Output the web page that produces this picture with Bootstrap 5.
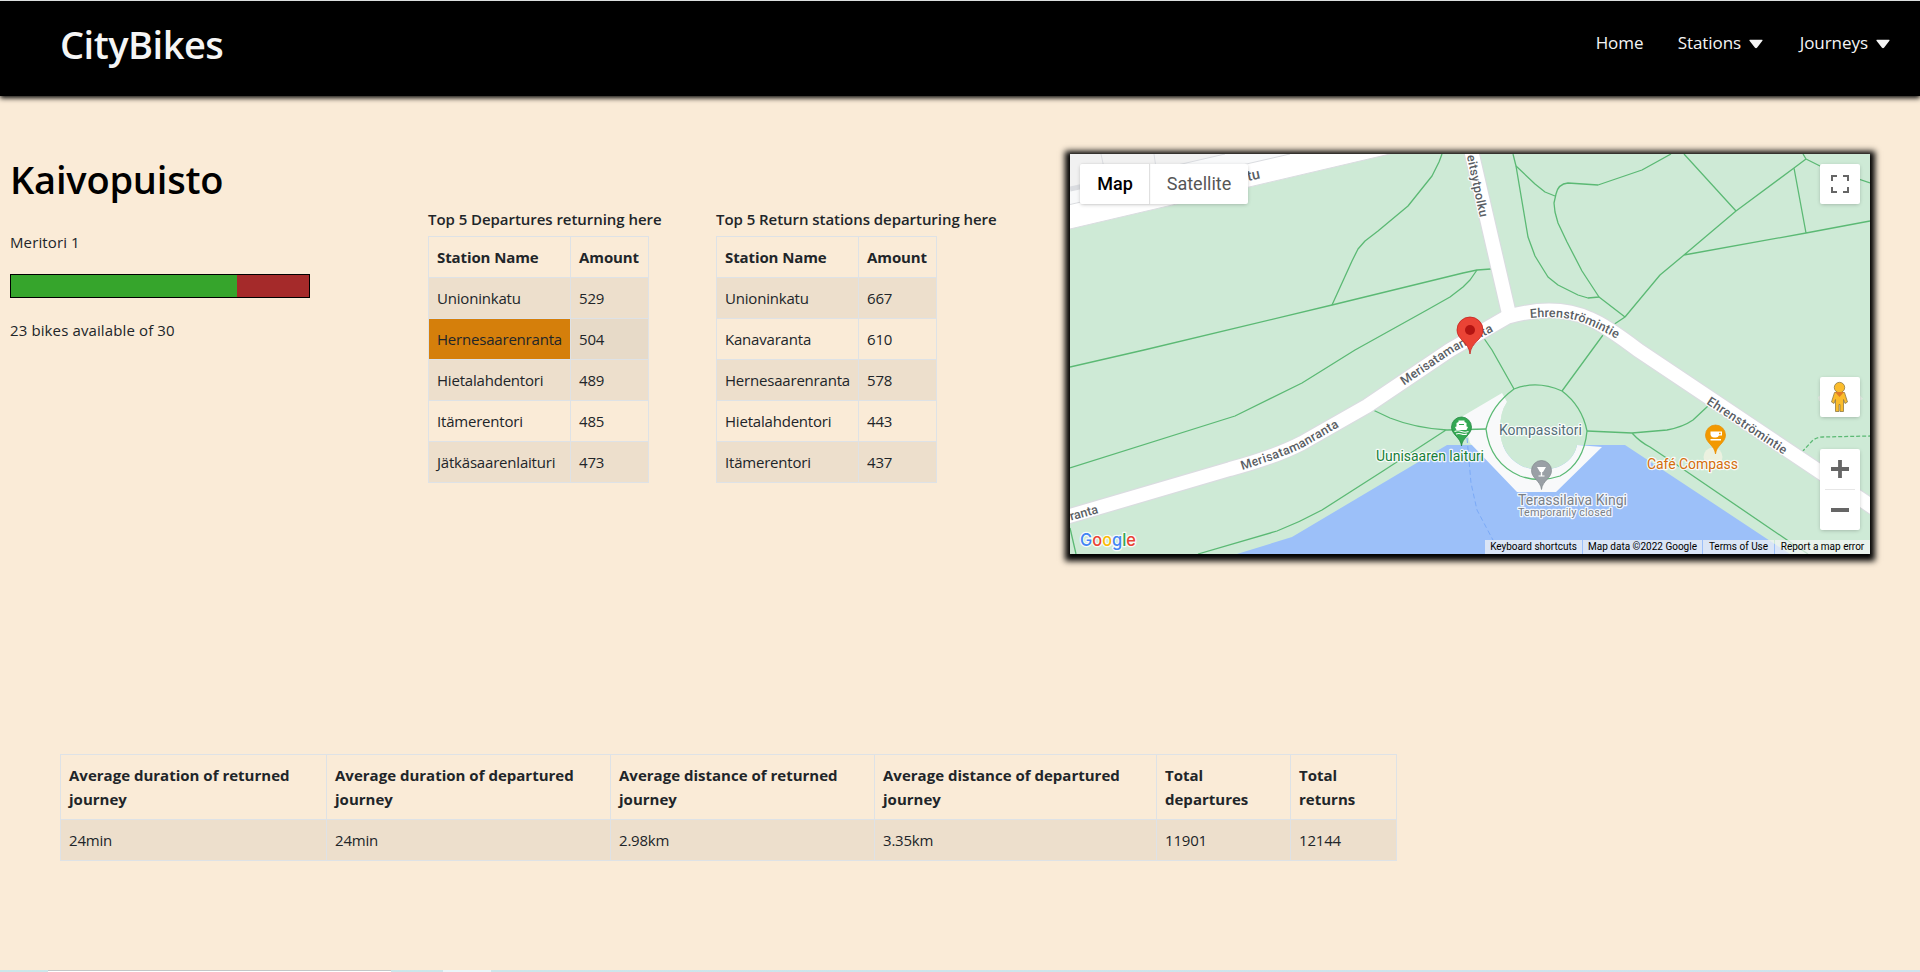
<!DOCTYPE html>
<html lang="en">
<head>
<meta charset="utf-8">
<meta name="viewport" content="width=device-width, initial-scale=1">
<title>CityBikes</title>
<link href="https://cdn.jsdelivr.net/npm/bootstrap@5.3.0/dist/css/bootstrap.min.css" rel="stylesheet">
<style>
  html, body { height: 972px; overflow: hidden; }
  body { background: #faebd7; font-family: "Open Sans", "Noto Sans", sans-serif; font-size: 15px; line-height: 24px; letter-spacing: -.2px; color: #212529; }
  h1 { font-size: 38px; line-height: 48px; font-weight: 600; margin: 0; }
  .site-header { height: 96px; background: #000; border-top: 1px solid #dcdfdf; box-shadow: 0 2px 5px #000; padding: 19px 30px 0 60px; color: whitesmoke; }
  .site-header h1 { letter-spacing: -.5px; }
  .site-nav { font-size: 17px; letter-spacing: -.05px; padding-top: 10px; }
  .site-nav a { color: whitesmoke; text-decoration: none; display: flex; align-items: center; }
  .site-nav a.plain { padding-top: 1px; }
  .site-nav svg { margin: 3px 0 0 8px; }
  .station-row { padding: 58px 50px 0 10px; height: 658px; }
  .station-info { width: 418px; padding-top: 1px; }
  .station-info h1 { color: #000; letter-spacing: -.2px; margin: 0 0 27px 0; }
  .station-info p { margin: 0 0 20px 0; letter-spacing: .12px; }
  .capacity { width: 300px; height: 24px; border: 1px solid #000; background: #a52a2a; margin-bottom: 20px; }
  .capacity-fill { height: 100%; background: #36a52c; }
  .top-list { padding-top: 53px; width: 288px; }
  .top-list.second { width: 354px; }
  .top-list h2 { font-size: 15px; line-height: 24px; font-weight: 600; letter-spacing: -.05px; margin: 0 0 5px; white-space: nowrap; }
  .stat-table { --bs-table-bg: transparent; --bs-table-striped-bg: rgba(0,0,0,.05); --bs-table-border-color: #dee2e6; table-layout: fixed; margin: 0; }
  .stat-table th { letter-spacing: -.1px; }
  .top-list .stat-table { width: 221px; }
  .stat-table td.picked { background: #d57f0b; box-shadow: none; }
  .stat-table td.picked-row { background: #e7dac8; box-shadow: none; }
  .summary { padding-left: 60px; height: 216px; }
  .summary .stat-table { width: 1337px; }
  .summary .stat-table th { letter-spacing: .01px; }
  .bottom-edge { height: 2px; background: linear-gradient(90deg, #cbe7ea, #cfe3ee); }
  .bottom-edge .field { margin-left: 48px; width: 343px; background: #fff; border-top: 1px solid #c3c7c9; }
  .bottom-edge .chip { margin-left: 52px; width: 48px; background: #eaf6fa; }

  .map-box { width: 800px; height: 400px; box-shadow: 0 2px 6px 5px #000; font-family: Roboto, sans-serif; letter-spacing: 0; overflow: visible; }
  .map-box > svg { display: block; }
  .ctl { position: absolute; background: #fff; border-radius: 2px; box-shadow: 0 1px 4px -1px rgba(0,0,0,.3); color: #666; }
  .map-type { left: 10px; top: 10px; width: 168px; height: 40px; font-size: 18px; line-height: 40px; }
  .map-type span:first-child { width: 69px; padding-left: 1px; color: #000; font-weight: 500; box-shadow: 1px 0 1px rgba(0,0,0,.12); text-align: center; }
  .map-type span:last-child { flex: 1; padding-left: 1px; color: #565656; text-align: center; }
  .full { left: 750px; top: 10px; width: 40px; height: 40px; }
  .peg { left: 750px; top: 223px; width: 40px; height: 40px; }
  .zoomer { left: 750px; top: 295px; width: 40px; height: 81px; }
  .attribution { position: absolute; right: 0; bottom: 0; height: 14px; width: 385px; font-size: 10px; line-height: 14px; color: #000; white-space: nowrap; gap: 1px; }
  .attribution span { background: rgba(245,245,245,.7); text-align: center; }
  .paths { fill: none; stroke: #5bb974; stroke-width: 1.3; stroke-linejoin: round; }
  .halo { stroke: #fff; stroke-width: 2.5px; stroke-linejoin: round; paint-order: stroke; stroke-opacity: .85; }
</style>
</head>
<body>
<header class="site-header d-flex justify-content-between align-items-start">
  <h1>CityBikes</h1>
  <nav class="site-nav d-flex">
    <a class="plain" href="#" style="width:82px">Home</a>
    <a href="#" style="width:122px">Stations<svg width="14" height="10"><path d="M1 .8h12q1 .2.4 1L8 8.8q-1 .9-2 0L.5 1.8q-.5-.8.5-1z" fill="#f5f5f5"/></svg></a>
    <a href="#">Journeys<svg width="14" height="10"><path d="M1 .8h12q1 .2.4 1L8 8.8q-1 .9-2 0L.5 1.8q-.5-.8.5-1z" fill="#f5f5f5"/></svg></a>
  </nav>
</header>

<main>
  <section class="station-row d-flex">
    <div class="station-info flex-shrink-0">
      <h1>Kaivopuisto</h1>
      <p>Meritori 1</p>
      <div class="capacity"><div class="capacity-fill" style="width:76%"></div></div>
      <p>23 bikes available of 30</p>
    </div>
    <div class="top-list flex-shrink-0">
      <h2>Top 5 Departures returning here</h2>
      <table class="table table-bordered table-striped stat-table">
        <colgroup><col style="width:142px"><col></colgroup>
        <thead><tr><th>Station Name</th><th>Amount</th></tr></thead>
        <tbody>
          <tr><td>Unioninkatu</td><td>529</td></tr>
          <tr><td class="picked">Hernesaarenranta</td><td class="picked-row">504</td></tr>
          <tr><td>Hietalahdentori</td><td>489</td></tr>
          <tr><td>Itämerentori</td><td>485</td></tr>
          <tr><td>Jätkäsaarenlaituri</td><td>473</td></tr>
        </tbody>
      </table>
    </div>
    <div class="top-list second flex-shrink-0">
      <h2>Top 5 Return stations departuring here</h2>
      <table class="table table-bordered table-striped stat-table">
        <colgroup><col style="width:142px"><col></colgroup>
        <thead><tr><th>Station Name</th><th>Amount</th></tr></thead>
        <tbody>
          <tr><td>Unioninkatu</td><td>667</td></tr>
          <tr><td>Kanavaranta</td><td>610</td></tr>
          <tr><td>Hernesaarenranta</td><td>578</td></tr>
          <tr><td>Hietalahdentori</td><td>443</td></tr>
          <tr><td>Itämerentori</td><td>437</td></tr>
        </tbody>
      </table>
    </div>
    <div class="map-box position-relative flex-shrink-0">
      <svg width="800" height="400" viewBox="0 0 800 400" font-family="Roboto, sans-serif">
        <rect width="800" height="400" fill="#ceead6"/>
        <!-- street corner -->
        <path d="M0 0H320L0 75z" fill="#fff"/>
        <path d="M0 50L220 0H0z" fill="#f8f9fa"/>
        <path d="M0 36L155 0H0z" fill="#f1f1f1"/>
        <path d="M0 35L14 32" stroke="#dadce0" stroke-width="5"/>
        <path d="M0 50.500L220 0M0 75L320 0M60 22L155 0M31 0L34 14M84 0L86 14" stroke="#dadce0" fill="none"/>
        <!-- water and pier -->
        <path d="M167 400L222 383L377 291H555L720 400z" fill="#9cc0f9"/>
        <path d="M393 262L432 239L437 248Q430 258 430 276Q431 300 450 311Q467 320 488 313Q504 306 507 291L532 293L486 338H447L400 289z" fill="#f8f9fa"/>
        <path d="M437 248Q430 258 430 276Q431 300 450 311Q467 320 488 313Q504 306 507 291L520 270L490 235L450 233z" fill="#ceead6"/>
        <path d="M397 284L401 329L407 356L424 388" fill="none" stroke="#7baaf7" stroke-dasharray="5 3"/>
        <circle cx="643" cy="303" r="9.500" fill="#ebf1e0"/>
        <path d="M748 243l5-4h35l5 6-4 2h-40z" fill="#e4ece4"/>
        <g class="paths">
          <path d="M372 0L369 8L362 22L338 52L308 77L295 87L288 95L282 107L267 140L262 151"/>
          <path d="M421 115L407 116L393 119L262 151L74 196L0 213"/>
          <path d="M407 116L400 126L393 133L380 143L357 156L285 196L232 229L165 262L0 314"/>
          <path d="M303 256L320 264Q345 274 377 276L416 275M376 276L313 317L252 356Q230 368 207 377L128 400M0 374L6 400"/>
          <path d="M413 183L422 196L444 235M533 181L522 196L492 237"/>
          <path d="M416 275Q421 252 444 235Q467 226 492 237Q512 252 517 277Q514 309 490 322Q470 329 450 322Q420 309 416 275z"/>
          <path d="M517 277L562 279L597 276Q613 273 623 266L638 252M562 279Q570 288 580 293L607 311L720 388L738 400"/>
          <path d="M732 298L743 286Q748 283 753 283L800 282" stroke-dasharray="4 2"/>
          <path d="M443 0L446 12L458 83L465 102L473 115L478 123L488 131L508 141L518 144L529 143L512 117L497 88L488 69L485 58L484 49L486 40Q488 30 498 29L513 30L528 31L572 16L601 0"/>
          <path d="M446 12L465 30L475 38L485 42M529 143L555 163L543 171M555 163L590 121L614 101L666 57L724 14L736 5L733 0M736 5L750 12L800 29M614 0L666 57M724 14L736 79M614 101L736 79L800 67"/>
        </g>
        <!-- roads -->
        <g fill="none" stroke-linejoin="round">
          <g stroke="#dadce0" stroke-width="16"><path d="M401.500 -2L417 65L439 160"/><path d="M-4 363L160 315Q205 303 232 289L297 252L380 196L437 163Q485 149 520 165Q535 171 568 196L804 354"/></g>
          <g stroke="#fff" stroke-width="13.800"><path d="M401.500 -2L417 65L439 160"/><path d="M-4 363L160 315Q205 303 232 289L297 252L380 196L437 163Q485 149 520 165Q535 171 568 196L804 354"/></g>
        </g>
        <defs>
          <path id="r1" d="M172 316Q215 302.500 232 294L292 259.500"/>
          <path id="r2" d="M334 231.500L383 198.500L442 167.500"/>
          <path id="r3" d="M460 164Q485 161.500 505 166Q525 171.500 560 192.500"/>
          <path id="r4" d="M636 249.500L728 310"/>
          <path id="r5" d="M395.500 -4L413 78"/>
        </defs>
        <g class="halo" fill="#5a5e64" font-size="12.500" font-weight="500">
          <text><textPath href="#r1" textLength="107">Merisatamanranta</textPath></text>
          <text><textPath href="#r2" textLength="105">Merisatamanranta</textPath></text>
          <text><textPath href="#r3" textLength="91">Ehrenströmintie</textPath></text>
          <text><textPath href="#r4" textLength="93">Ehrenströmintie</textPath></text>
          <text><textPath href="#r5" startOffset="6" textLength="63">eitsytpolku</textPath></text>
          <text transform="translate(1 366.500) rotate(-15)">ranta</text>
          <text transform="translate(178 27) rotate(-12)" font-size="14.500">tu</text>
        </g>
        <!-- selected station -->
        <path d="M400 200C399 188 387 186 387 176A13 13 0 0 1 413 176C413 186 401 188 400 200z" fill="#ea4335" stroke="#c5221f" stroke-width=".8"/>
        <circle cx="400" cy="176" r="5" fill="#b31412"/>
        <!-- places -->
        <g fill="#34a853" stroke="#188038" stroke-width=".7"><path d="M391.500 292C390.500 283 381.500 281 381.500 273A10 10 0 0 1 401.500 273C401.500 281 392.500 283 391.500 292z"/></g>
        <path d="M386.500 272.500v-3.500l2-1v-1.500h6v1.500l2 1v3.500l1.500.500-1.500 3h-10l-1.500-3z" fill="#fff"/>
        <path d="M389 270.500h5" stroke="#34a853"/>
        <path d="M384.500 277.500q3.500-1.500 7 0t7 0M386 280q3-1 5.500 0t5.500 0" fill="none" stroke="#fff" stroke-width="1.200"/>
        <g fill="#9aa0a6" stroke="#80868b" stroke-width=".7"><path d="M471.500 335.500C470.500 326.500 461.500 324.500 461.500 316.500A10 10 0 0 1 481.500 316.500C481.500 324.500 472.500 326.500 471.500 335.500z"/></g>
        <path d="M467 313h9l-3 5h-.8v3.500h2.300v1h-6v-1h2.300v-3.500h-.8z" fill="#fff"/>
        <g fill="#f29900" stroke="#e88b00" stroke-width=".7"><path d="M645.500 300C644.500 291 635.500 289 635.500 281A10 10 0 0 1 655.500 281C655.500 289 646.500 291 645.500 300z"/></g>
        <path d="M640.500 277.500h11.500v4h-3q-1 2-3 2h-2q-3 0-3.500-3zM640.500 285h10.500v1.500h-10.500z" fill="#fff"/><path d="M649 278.700h1.700v1.500h-1.700z" fill="#f29900"/>
        <g class="halo" font-size="14">
          <text x="306" y="307" fill="#188038" textLength="108">Uunisaaren laituri</text>
          <text x="429" y="281" fill="#546e7a" textLength="83">Kompassitori</text>
          <text x="448" y="351" fill="#7a7f86" textLength="109">Terassilaiva Kingi</text>
          <text x="448" y="362" fill="#7a7f86" font-size="11" textLength="94">Temporarily closed</text>
          <text x="577" y="315" fill="#d56e0c" textLength="91">Café Compass</text>
        </g>
        <text class="halo" x="10" y="391.500" font-size="17.500" font-family="Inter, sans-serif" font-weight="500" textLength="56" lengthAdjust="spacingAndGlyphs"><tspan fill="#4285f4">G</tspan><tspan fill="#ea4335">o</tspan><tspan fill="#fbbc04">o</tspan><tspan fill="#4285f4">g</tspan><tspan fill="#34a853">l</tspan><tspan fill="#ea4335">e</tspan></text>
      </svg>
      <div class="ctl map-type d-flex"><span>Map</span><span>Satellite</span></div>
      <div class="ctl full"><svg class="d-block" width="40" height="40" fill="none" stroke="#666" stroke-width="2"><path d="M12 17v-5h5M23 12h5v5M28 23v5h-5M17 28h-5v-5"/></svg></div>
      <div class="ctl peg"><svg class="d-block" width="40" height="40" fill="#fbbc2c" stroke="#8d7a48" stroke-width=".8"><path d="M14.500 15.500l-3 9.500 2.500 1.500 1.500-4v12h3.500v-7h1v7h3.500v-12l1.500 4 2.500-1.500-3-9.500z"/><circle cx="19.500" cy="10.500" r="5.200"/><path d="M15 15h9l-4.500 5z" fill="#e07b28" stroke="none"/></svg></div>
      <div class="ctl zoomer"><svg class="d-block" width="40" height="81"><path d="M11 20h18M20 11v18M11 61h18" stroke="#666" stroke-width="3.800"/><path d="M5 40.500h30" stroke="#e6e6e6"/></svg></div>
      <div class="attribution d-flex"><span style="width:97px">Keyboard shortcuts</span><span style="width:119px">Map data ©2022 Google</span><span style="width:71px">Terms of Use</span><span class="flex-fill">Report a map error</span></div>
    </div>
  </section>

  <section class="summary">
    <table class="table table-bordered table-striped stat-table">
      <colgroup><col style="width:266px"><col style="width:284px"><col style="width:264px"><col style="width:282px"><col style="width:134px"><col></colgroup>
      <thead><tr>
        <th>Average duration of returned journey</th><th>Average duration of departured journey</th><th>Average distance of returned journey</th><th>Average distance of departured journey</th><th>Total<br>departures</th><th>Total<br>returns</th>
      </tr></thead>
      <tbody><tr><td>24min</td><td>24min</td><td>2.98km</td><td>3.35km</td><td>11901</td><td>12144</td></tr></tbody>
    </table>
  </section>
</main>
<div class="bottom-edge d-flex"><div class="field"></div><div class="chip"></div></div>
<script src="https://cdn.jsdelivr.net/npm/bootstrap@5.3.0/dist/js/bootstrap.bundle.min.js"></script>
</body>
</html>
